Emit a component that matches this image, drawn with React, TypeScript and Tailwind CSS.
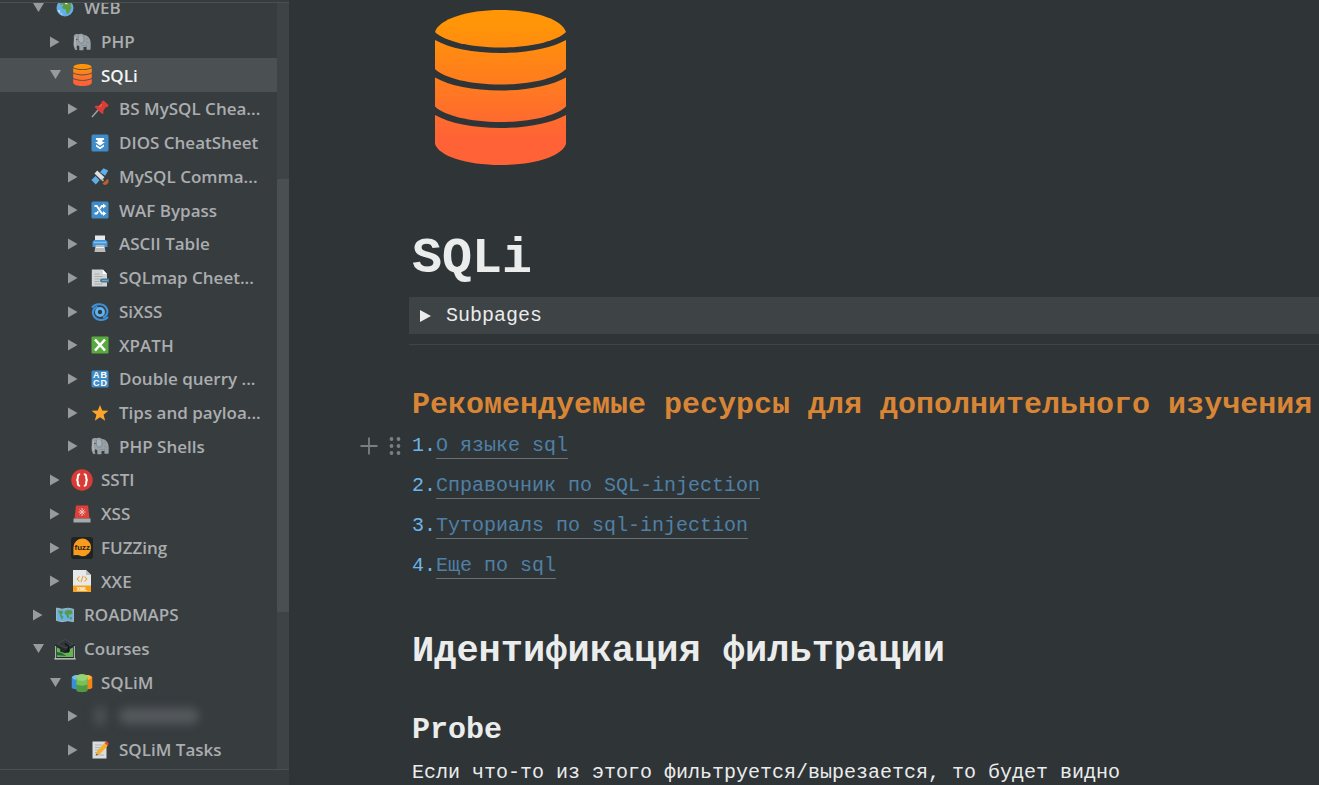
import type { ReactNode } from "react";

type Item = {
  label: string;
  level: 1 | 2 | 3;
  open?: boolean;
  active?: boolean;
  hidden?: boolean;
  icon: ReactNode;
};

const DB_PATHS = [
  "M0 22C4 9 32 0 65.500 0S127 9 131 22C122 31 96 37.500 65.500 37.500S9 31 0 22Z",
  "M0 30C14 38 38 43 65.500 43S117 38 131 30V59C122 68 96 74.500 65.500 74.500S9 68 0 59Z",
  "M0 67.500C14 75.500 38 80.500 65.500 80.500S117 75.500 131 67.500V96.500C122 105.500 96 112 65.500 112S9 105.500 0 96.500Z",
  "M0 105C14 113 38 118 65.500 118S117 113 131 105V134C127 146 100 155 65.500 155S4 146 0 134Z",
];

function Database({ id, className }: { id: string; className: string }) {
  return (
    <svg viewBox="0 0 131 155" className={className} aria-hidden="true">
      <defs>
        <linearGradient id={id} gradientUnits="userSpaceOnUse" x1="0" y1="15" x2="0" y2="130">
          <stop offset="0" stopColor="#ff9507" />
          <stop offset="1" stopColor="#ff6236" />
        </linearGradient>
      </defs>
      {DB_PATHS.map((d) => (
        <path key={d} d={d} fill={`url(#${id})`} />
      ))}
    </svg>
  );
}

function Glyph({ children, large }: { children: ReactNode; large?: boolean }) {
  return (
    <svg viewBox="0 0 18 18" className={large ? "h-[22px] w-[22px]" : "h-[18px] w-[18px]"} aria-hidden="true">
      {children}
    </svg>
  );
}

const Globe = () => (
  <Glyph>
    <circle cx="9" cy="9" r="8.500" fill="#63aee8" />
    <path d="M4.500 3.500 8 1.200l4.500.4 3 3-1 2.400 1 1.500-1.500 3.500-2 3-1.500-.5-.5-4-2.500-.5L5.500 8l2-1.500-1-1.200-2.500.5Z" fill="#5d9c3c" />
    <path d="M9 4.500l2.500.3M4.500 15h2" stroke="#cfe6f7" strokeWidth="1.200" />
    <path d="M1.500 11l1.500 3 1.500-.6L4 11Z" fill="#b7dbf4" />
  </Glyph>
);

const Elephant = () => (
  <Glyph>
    <path d="M.8 3C1.500 1.200 3.500.8 5 1.300 7 .3 9.500.6 11 2c3.500.2 6 3 6.500 6.500.3 2.500.3 5 0 8.200h-4v-3c-1 .5-2 .5-3 .3v3.200H6.300v-4l-2-1c-.8 1.500-.6 3 .2 4.200l-2 .8C.3 14.500.3 10.500.8 8Z" fill="#999fa3" />
    <path d="M5.500 3c-.8 3 0 6 2 7 2.300.5 3.800-1 3.600-3.800C11 4.500 10.500 3.300 9.500 2.500" fill="#abb0b3" stroke="#6d8798" strokeWidth=".9" />
    <path d="M2.500 4c-.7 2.500-.9 6 0 9.500" fill="none" stroke="#bcc1c4" strokeWidth="1" />
    <path d="M13 5l2 1.500M13 9l2.500 1M9 12.500h4M13.500 13.500v-2" stroke="#7494a8" strokeWidth=".9" />
    <circle cx="3.800" cy="6.500" r=".8" fill="#4b5458" />
  </Glyph>
);

const Pin = () => (
  <Glyph>
    <path d="M1 17 8 9" stroke="#9ba1a4" strokeWidth="1.500" />
    <path d="M10.500 1.500 12.500.4 17.600 5l-1.300 2.200-1.300-.1-2.500 3.100-.1 3.100-1.200.8L3.600 7l1-1.200 3-.1 3-2.800Z" fill="#dc3c38" />
    <path d="M11 4.500 8.300 7" stroke="#f07a70" strokeWidth="1" />
  </Glyph>
);

const BlueBox = ({ children }: { children: ReactNode }) => (
  <Glyph>
    <rect x=".5" y=".5" width="17" height="17" rx="1.500" fill="#3f8cc9" />
    {children}
  </Glyph>
);

const FastDown = () => (
  <BlueBox>
    <path d="M5 4h8v2h-1.500v2H14L9 11.800 4 8h2.500V6H5ZM5 10.500 9 13.300l4-2.800v2L9 15.200l-4-2.700Z" fill="#fff" />
  </BlueBox>
);

const Satellite = () => (
  <Glyph>
    <path d="m9 4.200 3.500-4 4.700 2.300-3 5.200ZM.4 12 4.500 8l4 4.300-3.700 4.200Z" fill="#5faeea" />
    <path d="m3.500 5.500 2.700-3 7.300 6.700-3 3Z" fill="#dce0e1" />
    <path d="m10.500 11 2 1.800" stroke="#aeb3b5" strokeWidth="1.700" />
    <path d="M11.500 15.500 16.800 10.800c1.600 2 .8 4.200-.9 5.400s-3.500.8-4.400-.7Z" fill="#ba612b" />
  </Glyph>
);

const Shuffle = () => (
  <BlueBox>
    <path d="M3.500 5h2.300l5 7.500H13M3.500 12.500h2.300l1.500-2.200M9 7.500 10.800 5H13" fill="none" stroke="#fff" strokeWidth="1.800" />
    <path d="m12 2.400 3.300 2.600L12 7.600ZM12 9.900l3.300 2.600-3.300 2.600Z" fill="#fff" />
  </BlueBox>
);

const Printer = () => (
  <Glyph>
    <path d="M4 .5h10V6H4Z" fill="#e6e8e9" />
    <path d="M3 5h12l1.500 2v5H14L13 10H5l-1 2H1.500V7Z" fill="#4195d8" />
    <path d="M2.500 7.500h13" stroke="#81c0ef" strokeWidth="1.500" />
    <path d="M4.500 10h9l1 7h-11Z" fill="#b7bcbe" />
    <path d="M5 12.500h8" stroke="#eef0f0" />
  </Glyph>
);

const PageLink = () => (
  <Glyph>
    <path d="M.8.5h11L16 5v12.500H.8Z" fill="#d1d4d5" />
    <path d="M11.800.5V5H16Z" fill="#fff" />
    <path d="M3.500 5h5M3.500 7.500h8M3.500 10h6M3.500 12.500h5M3.500 15h8" stroke="#a3a9ac" strokeWidth=".9" />
    <path d="M11 11.500h6.500" stroke="#477896" strokeWidth="4" strokeLinecap="round" />
    <path d="M11 11.500h6" stroke="#79a5c0" strokeWidth="1" />
  </Glyph>
);

const Cyclone = () => (
  <Glyph>
    <g fill="none" stroke="#3d90d6" strokeWidth="2.100">
      <path d="M1 4.500C4 .5 11.500 0 14.700 4s1.500 9-2.700 10.500" />
      <path d="M17 14C13.500 18 6.500 18 3.500 14S2 5 6.500 3.800" />
    </g>
    <circle cx="9" cy="9" r="3.600" fill="none" stroke="#62b4ef" strokeWidth="2.800" />
    <circle cx="9" cy="9" r="1.500" fill="#233c50" />
  </Glyph>
);

const CrossBox = () => (
  <Glyph>
    <rect x=".5" y=".5" width="17" height="17" rx="1" fill="#58aa3f" />
    <path d="m4 3.500 10 11M14 3.500l-10 11" stroke="#fff" strokeWidth="2.600" />
  </Glyph>
);

const Abcd = () => (
  <BlueBox>
    <g fill="#fff" fontFamily="Liberation Sans, sans-serif" fontWeight="700" fontSize="9">
      <text x="2" y="8.300">A</text>
      <text x="9.500" y="8.300">B</text>
      <text x="2" y="16.300">C</text>
      <text x="9.500" y="16.300">D</text>
    </g>
  </BlueBox>
);

const Star = () => (
  <Glyph>
    <path d="m9 1 2.200 5.500 6.200.3-4.800 3.900 1.600 6L9 13.300l-5.200 3.400 1.600-6L.6 6.800l6.200-.3Z" fill="#fba52b" />
  </Glyph>
);

const Braces = () => (
  <Glyph large>
    <circle cx="9" cy="9" r="8.800" fill="#d93b35" />
    <path d="M7.500 4.300c-1.800 0-1.900.6-1.900 2.200C5.600 8 5.400 9 4.300 9c1.100 0 1.300 1 1.300 2.500 0 1.600.1 2.200 1.900 2.200M10.500 4.300c1.800 0 1.900.6 1.900 2.200 0 1.500.2 2.500 1.300 2.500-1.100 0-1.300 1-1.300 2.500 0 1.600-.1 2.200-1.900 2.200" fill="none" stroke="#fff" strokeWidth="1.700" />
  </Glyph>
);

const Siren = () => (
  <Glyph>
    <path d="M3 .5h12l1.500 13h-15Z" fill="#dc403b" />
    <path d="M.5 13.500h17v4H.5Z" fill="#a4aaad" />
    <path d="M9 3v8M5.500 7h7M6.500 4.500l5 5M11.500 4.500l-5 5" stroke="#f4c3bd" strokeWidth="1" />
  </Glyph>
);

const Fuzz = () => (
  <Glyph large>
    <rect width="18" height="18" rx="2.500" fill="#202224" />
    <path d="M2 15V8.500a7.200 7.200 0 1 1 7.500 7.200c-2 .1-3-1-4.200-1Z" fill="#f89b1f" />
    <text x="9.200" y="11" textAnchor="middle" fontFamily="Liberation Sans, sans-serif" fontWeight="700" fontSize="6.500" fill="#2b210f">fuzz</text>
  </Glyph>
);

const XmlFile = () => (
  <svg viewBox="0 0 18 22" className="h-[22px] w-[18px]" aria-hidden="true">
    <path d="M0 0h13l5 5v17H0Z" fill="#e7e8e8" />
    <path d="M13 0v5h5Z" fill="#b9bdbf" />
    <path d="M0 15.500h18V22H0Z" fill="#f7a21d" />
    <path d="M6.500 6.500 4.200 9l2.300 2.500M11.500 6.500 13.800 9l-2.300 2.500M10 5.800l-2 6.400" fill="none" stroke="#eda32f" strokeWidth="1.100" />
    <text x="9" y="21" textAnchor="middle" fontFamily="Liberation Sans, sans-serif" fontWeight="700" fontSize="5" fill="#fff">XML</text>
  </svg>
);

const WorldMap = () => (
  <Glyph>
    <path d="M.5 2 6 3.200l6-1 5.500 1v12.500l-5.500-1-6 1L.5 14.500Z" fill="#63b3ea" stroke="#b1b9b9" strokeWidth=".9" />
    <path d="m2 5 4-.5 1.300 2-1.800 1.700.5 1.500 1.500 1-1.500 3L4.500 11 3.800 8ZM9 5l3-1 4 .5.5 2.500-2 1.700L12.500 8l.8 3-1.800 1.500L10.300 9 8.500 7.500ZM13.500 11.500l2-.5.5 2-2 .4Z" fill="#589846" />
  </Glyph>
);

const Course = () => (
  <Glyph large>
    <path d="M.8 16.500V6L9 .8 17.200 6v10.500Z" fill="#25292b" />
    <path d="M1.300 16.500V6.500M16.700 16.500V6.500" stroke="#b0b5b7" strokeWidth=".9" />
    <path d="M2.300 7.500 5 9v2l4 1.500 4-1.500V9l2.700-1.500v8H2.300Z" fill="#65b653" />
    <path d="M2.300 11.500 6 12l4 2.800-4-.4-3.700-.3Z" fill="#266537" />
    <path d="M9 1.200 15.500 5 9.500 8.300 2.500 5Z" fill="#303639" stroke="#555d61" strokeWidth=".5" />
    <path d="m9 4.500 3 2.500-.5 4.500-2-1" fill="none" stroke="#101314" strokeWidth="1.100" />
    <path d="M.3 16.500h17.400v1.100H.3Z" fill="#cbd0d2" />
  </Glyph>
);

const Barrels = () => (
  <Glyph large>
    <path d="M.6 4.300 6 3.500v11L1.500 13.800.6 12.700Z" fill="#398fd4" />
    <path d="M.6 4.300C1.800 2.600 4.500 2.300 6 2.700V7C4 6.700 2 6 .6 4.300Z" fill="#77bdf0" />
    <path d="m12 3.500 5.400.8v8.400l-.9 1.100-4.500.7Z" fill="#f58416" />
    <path d="M12 2.700c1.500-.4 4.200-.1 5.400 1.600C16 6 14 6.700 12 7Z" fill="#fdb43c" />
    <path d="M4.500 4.500h9v11c-2.500 1.300-6.500 1.300-9 0Z" fill="#509b42" />
    <path d="M4.500 5.500h9v4.800c-2.500 1.200-6.500 1.200-9 0Z" fill="#76c15a" />
    <ellipse cx="9" cy="4.500" rx="4.600" ry="2.900" fill="#93d373" />
  </Glyph>
);

const Memo = () => (
  <Glyph>
    <path d="M1.500.5h14v17h-14Z" fill="#dbdddd" />
    <path d="M4 4h7M4 6.500h5M4 9h4M4 11.500h2M4 14h9" stroke="#a5b0b6" strokeWidth=".9" />
    <path d="m5 14.500 1.200-4.500L13.500 2l3.500 2.500-8 8.500Z" fill="#f9ae2c" />
    <path d="m13.500 2 1.500-1.500c1.600 0 2.700 1 2.800 2.500l-1 1.500Z" fill="#dd4340" />
    <path d="m5 14.500.6-2 1.500 1.300Z" fill="#57483b" />
  </Glyph>
);

const ITEMS: Item[] = [
  { label: "WEB", level: 1, open: true, icon: <Globe /> },
  { label: "PHP", level: 2, icon: <Elephant /> },
  { label: "SQLi", level: 2, open: true, active: true, icon: <Database id="db-tree" className="h-[22px] w-[19px]" /> },
  { label: "BS MySQL Chea...", level: 3, icon: <Pin /> },
  { label: "DIOS CheatSheet", level: 3, icon: <FastDown /> },
  { label: "MySQL Comma...", level: 3, icon: <Satellite /> },
  { label: "WAF Bypass", level: 3, icon: <Shuffle /> },
  { label: "ASCII Table", level: 3, icon: <Printer /> },
  { label: "SQLmap Cheet...", level: 3, icon: <PageLink /> },
  { label: "SiXSS", level: 3, icon: <Cyclone /> },
  { label: "XPATH", level: 3, icon: <CrossBox /> },
  { label: "Double querry ...", level: 3, icon: <Abcd /> },
  { label: "Tips and payloa...", level: 3, icon: <Star /> },
  { label: "PHP Shells", level: 3, icon: <Elephant /> },
  { label: "SSTI", level: 2, icon: <Braces /> },
  { label: "XSS", level: 2, icon: <Siren /> },
  { label: "FUZZing", level: 2, icon: <Fuzz /> },
  { label: "XXE", level: 2, icon: <XmlFile /> },
  { label: "ROADMAPS", level: 1, icon: <WorldMap /> },
  { label: "Courses", level: 1, open: true, icon: <Course /> },
  { label: "SQLiM", level: 2, open: true, icon: <Barrels /> },
  { label: "", level: 3, hidden: true, icon: <span className="h-5 w-3 rounded-full bg-[#4c5154] blur-[5px]" /> },
  { label: "SQLiM Tasks", level: 3, icon: <Memo /> },
];

const INDENT = { 1: "pl-[33px]", 2: "pl-[50px]", 3: "pl-[68px]" };

function TreeRow({ item }: { item: Item }) {
  return (
    <li className={`flex items-center ${INDENT[item.level]} ${item.active ? "bg-[#4b5053] text-[#f3f4f4]" : "text-[#abadaf]"}`}>
      <button type="button" aria-expanded={!!item.open} aria-label="Toggle" className="flex w-3 shrink-0 text-[#989b9d]">
        <svg viewBox="0 0 12 12" className="h-3 w-3" fill="currentColor" aria-hidden="true">
          <path d={item.open ? "M0 1h11L5.500 10Z" : "M0 .5v11L9.500 6Z"} />
        </svg>
      </button>
      <a href="#" className="flex min-w-0 items-center gap-2 pl-[9px]">
        <span className="flex w-[22px] shrink-0 justify-center">{item.icon}</span>
        {item.hidden ? (
          <span className="h-4 w-20 rounded-full bg-[#54595c] blur-[5px]" />
        ) : (
          <span className="whitespace-nowrap">{item.label}</span>
        )}
      </a>
    </li>
  );
}

const LINKS = ["О языке sql", "Справочник по SQL-injection", "Туториалs по sql-injection", "Еще по sql"];

export default function App() {
  return (
    <div className="flex h-screen overflow-hidden bg-[#2f3437]">
      <aside className="flex w-[289px] shrink-0 flex-col bg-[#373c3f] font-['Open_Sans',sans-serif] text-[17px] font-semibold">
        <div className="h-[3px] shrink-0 border-b border-[#4a4f51]" />
        <div className="flex min-h-0 flex-1 overflow-hidden">
          <nav aria-label="Pages" className="min-w-0 flex-1">
            <ul className="-mt-3 grid h-[776px] auto-rows-fr">
              {ITEMS.map((item, i) => (
                <TreeRow key={i} item={item} />
              ))}
            </ul>
          </nav>
          <div className="w-3 shrink-0 bg-[#3e4346] pt-44">
            <div className="h-[433px] bg-[#4a4f51]" />
          </div>
        </div>
        <div className="h-4 shrink-0 border-t border-[#4a4f51]" />
      </aside>

      <main className="min-w-0 flex-1 overflow-hidden pl-[120px] font-['Liberation_Mono',monospace] text-xl text-[#ebecec]">
        <Database id="db-cover" className="mt-[10px] ml-[26px] h-[155px] w-[131px]" />
        <h1 className="mt-16 pl-[3px] text-[50px] leading-[60px] font-bold">SQLi</h1>
        <button type="button" className="mt-2 flex h-[37px] w-full items-center gap-[15px] bg-[#3e4345] pl-[11px] text-left">
          <svg viewBox="0 0 11 12" className="h-3 w-[11px]" fill="currentColor" aria-hidden="true">
            <path d="M0 0v12l11-6Z" />
          </svg>
          Subpages
        </button>
        <hr className="mt-[10px] border-[#3f4447]" />
        <div className="pl-[3px]">
          <h3 className="mt-10 text-[30px] leading-10 font-bold whitespace-nowrap text-[#d98536]">
            Рекомендуемые ресурсы для дополнительного изучения
          </h3>
          <ol className="mt-px">
            {LINKS.map((text, i) => (
              <li key={text} className="relative flex h-10 items-center text-[#6cb5ea]">
                {i === 0 && (
                  <div className="absolute -left-[52px] flex items-center gap-[11px] text-[#7b7f81]">
                    <button type="button" aria-label="Add block">
                      <svg viewBox="0 0 18 18" className="h-[18px] w-[18px]" aria-hidden="true">
                        <path d="M9 .5v17M.5 9h17" stroke="currentColor" strokeWidth="1.800" />
                      </svg>
                    </button>
                    <button type="button" aria-label="Move block">
                      <svg viewBox="0 0 12 18" className="h-[18px] w-3" fill="currentColor" aria-hidden="true">
                        {[2, 9, 16].map((y) => (
                          <g key={y}>
                            <circle cx="2.500" cy={y} r="1.900" />
                            <circle cx="9.500" cy={y} r="1.900" />
                          </g>
                        ))}
                      </svg>
                    </button>
                  </div>
                )}
                <span>{i + 1}.</span>
                <a href="#" className="border-b border-[#6b7073] leading-6 text-[#4f80a5]">
                  {text}
                </a>
              </li>
            ))}
          </ol>
          <h2 className="mt-[41px] text-[37px] leading-[48px] font-bold whitespace-nowrap">Идентификация фильтрации</h2>
          <h3 className="mt-[35px] text-[30px] leading-10 font-bold">Probe</h3>
          <p className="mt-2 leading-[30px]">Если что-то из этого фильтруется/вырезается, то будет видно</p>
        </div>
      </main>
    </div>
  );
}
